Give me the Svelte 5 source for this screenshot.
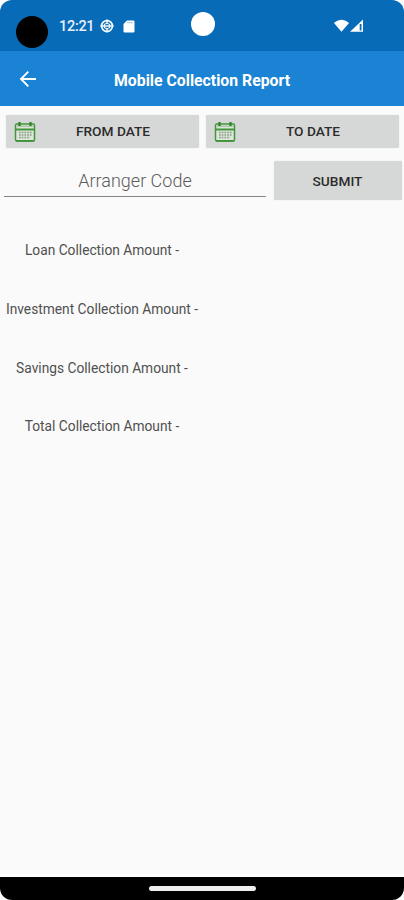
<script lang="ts">
	const dateButtons = ['FROM DATE', 'TO DATE'];
	const totals = [
		'Loan Collection Amount -',
		'Investment Collection Amount -',
		'Savings Collection Amount -',
		'Total Collection Amount -'
	];
</script>

<div class="phone">
	<div class="status-bar">
		<span class="recorder"></span>
		<span class="clock">12:21</span>
		<svg class="globe" width="14" height="14" viewBox="0 0 14 14" fill="none" stroke="#eef6fc">
			<circle cx="7" cy="7" r="5.4" stroke-width="1.8" />
			<path d="M7 .4v4.2M7 9.4v4.2M.4 7h13.2" stroke-width="1.6" />
			<path d="M4.4 7V5.4q2.6-1.8 5.2 0V7M4.4 7v1.6q2.6 1.8 5.2 0V7" stroke-width="1.1" />
		</svg>
		<svg class="sd-card" width="12" height="13" viewBox="0 0 12 13">
			<path d="M4 .5h6.2q1.3 0 1.3 1.3v9.4q0 1.3-1.3 1.3H1.8Q.5 12.5.5 11.2V4z" fill="white" />
			<path d="M4.3 2.6h5.4" stroke="#8ab9df" stroke-width="1.2" stroke-dasharray="1.3 .7" />
		</svg>
		<span class="camera"></span>
		<svg class="signal" width="30" height="14" viewBox="0 0 30 14" fill="white">
			<path d="M.4 3.6Q7.5-2 14.6 3.6q.3.5 0 1L7.5 12.8.4 4.6q-.3-.5 0-1z" />
			<path d="M29 .5v12.3H16z" />
			<path d="M25.7 5h1.8v6.5h-1.8z" fill="#0a6ab6" />
		</svg>
	</div>

	<header class="app-bar">
		<svg class="back" width="18" height="18" viewBox="0 0 18 18" fill="none" stroke="white" stroke-width="1.9">
			<path d="M17 9H2.5M9.3 1.7 2 9l7.3 7.3" />
		</svg>
		<h1>Mobile Collection Report</h1>
	</header>

	<main>
		<div class="dates">
			{#each dateButtons as label}
				<button>
					<svg width="22" height="22" viewBox="0 0 22 22" fill="none" stroke="#43953b">
						<rect x="1.5" y="3" width="19" height="17" rx="1.5" fill="#dce6da" stroke-width="1.5" />
						<path d="M1.5 8.5h19M2 19.8h18" stroke-width="1.8" />
						<path d="M3 5.2h16" stroke="#a9c7a5" stroke-width="1.6" />
						<path d="M5.5 1v4M16.5 1v4" stroke="#2c8126" stroke-width="2.2" />
						<path d="M5 11.5h13M5 14h13M5 16.5h11" stroke="#8a9d88" stroke-width="1.4" stroke-dasharray="1.7 1" />
					</svg>
					<span>{label}</span>
				</button>
			{/each}
		</div>

		<div class="search">
			<input type="text" placeholder="Arranger Code" />
			<button class="submit">SUBMIT</button>
		</div>

		<div class="totals">
			{#each totals as total}
				<p>{total}</p>
			{/each}
		</div>
	</main>

	<div class="nav-bar"><span></span></div>
</div>

<style>
	:global(body) {
		background: white;
	}

	.phone {
		display: flex;
		flex-direction: column;
		width: 404px;
		height: 900px;
		overflow: hidden;
		border-radius: 12px;
		background: #fafafa;
		font-family: Roboto, sans-serif;
	}

	.status-bar {
		display: flex;
		align-items: center;
		flex: none;
		height: 51px;
		box-sizing: border-box;
		background: #086bb7;
	}

	.recorder {
		width: 32px;
		height: 32px;
		margin: 12px 0 0 16px;
		border-radius: 50%;
		background: black;
	}

	.clock {
		width: 35px;
		margin: 2px 0 0 11px;
		color: #e5f0fa;
		font-size: 14.5px;
		font-weight: 500;
		letter-spacing: -0.3px;
		white-space: nowrap;
	}

	.globe {
		margin: 1px 0 0 6px;
	}

	.sd-card {
		margin: 1px 0 0 9px;
	}

	.camera {
		width: 24px;
		height: 24px;
		margin: -3px 0 0 56px;
		border-radius: 50%;
		background: white;
	}

	.signal {
		margin: 1px 0 0 119px;
	}

	.app-bar {
		display: flex;
		align-items: center;
		flex: none;
		height: 55px;
		background: #1b83d3;
	}

	.back {
		margin: 1px 0 0 19px;
	}

	h1 {
		margin: 3px 0 0 77px;
		color: white;
		font-size: 15.8px;
		font-weight: 700;
		white-space: nowrap;
	}

	main {
		flex: 1;
		border-bottom: 3px solid white;
	}

	button {
		border: 0;
		border-radius: 2px;
		background: #d6d8d7;
		box-shadow: 0 0 1px #c4c6c5;
		color: #2c2c2c;
		font-family: inherit;
		font-size: 13.7px;
		font-weight: 500;
	}

	.dates {
		display: grid;
		grid-template-columns: 1fr 1fr;
		gap: 7px;
		padding: 9px 5px 0 6px;
	}

	.dates button {
		display: flex;
		align-items: center;
		height: 33px;
		padding: 0 8px 1px;
	}

	.dates svg {
		margin-top: 2px;
	}

	.dates span {
		flex: 1;
		padding-left: 7px;
		padding-right: 8px;
		text-align: center;
	}

	.search {
		display: flex;
		gap: 8px;
		padding: 13px 2px 0 4px;
	}

	input {
		width: 262px;
		height: 36px;
		box-sizing: border-box;
		padding: 4px 0 0;
		border: 0;
		border-bottom: 1px solid #858585;
		outline: 0;
		background: transparent;
		font-family: inherit;
		font-size: 18px;
		font-weight: 300;
		text-align: center;
	}

	input::placeholder {
		color: #5c5c5c;
	}

	.submit {
		flex: 1;
		height: 39px;
		padding: 0 1px 0 0;
	}

	.totals {
		width: 204px;
		padding-top: 21px;
	}

	p {
		margin: 0;
		color: #505050;
		font-size: 13.75px;
		line-height: 58.8px;
		text-align: center;
		white-space: nowrap;
	}

	.nav-bar {
		display: flex;
		justify-content: center;
		align-items: center;
		flex: none;
		height: 23px;
		background: black;
	}

	.nav-bar span {
		width: 107px;
		height: 5px;
		border-radius: 3px;
		background: #eee;
	}
</style>
